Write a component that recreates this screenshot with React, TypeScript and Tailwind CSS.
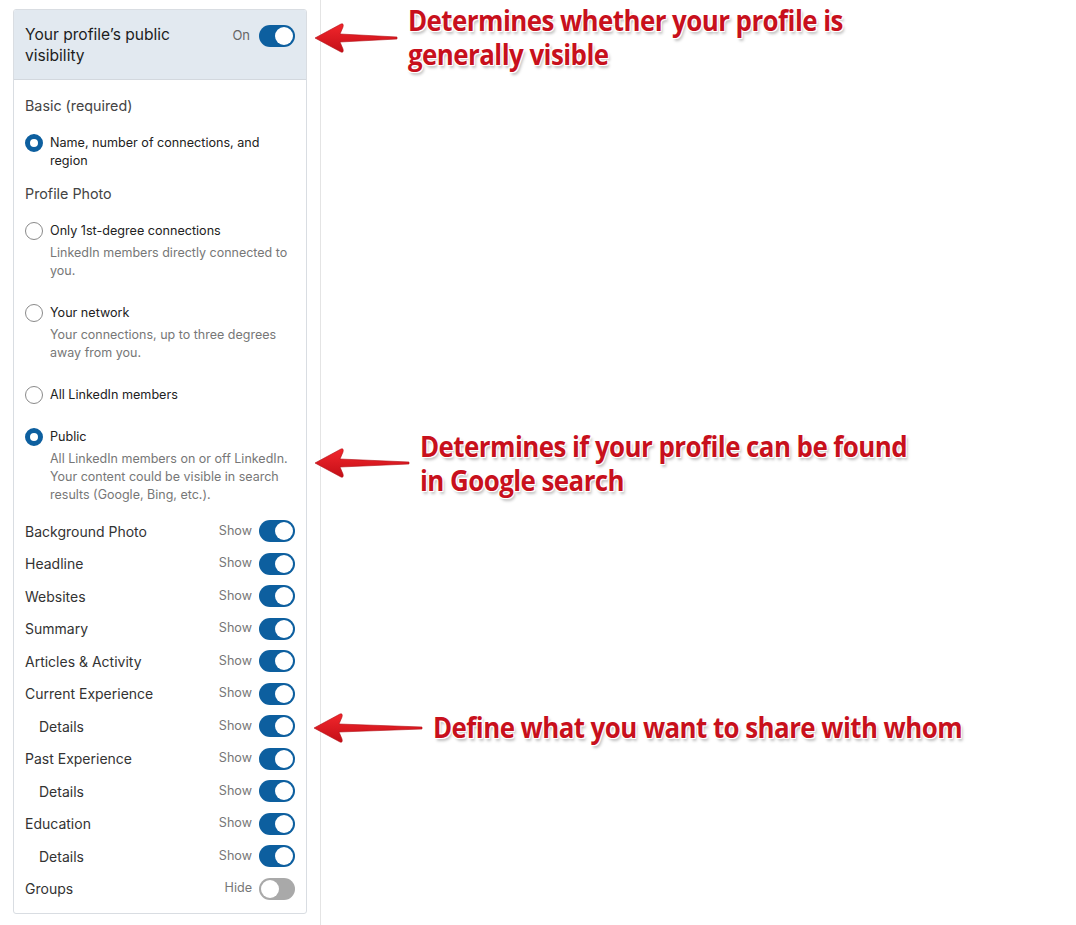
import React from "react";

type ToggleRow = { label: string; on: boolean; sub?: boolean };

const rows: ToggleRow[] = [
  { label: "Background Photo", on: true },
  { label: "Headline", on: true },
  { label: "Websites", on: true },
  { label: "Summary", on: true },
  { label: "Articles & Activity", on: true },
  { label: "Current Experience", on: true },
  { label: "Details", on: true, sub: true },
  { label: "Past Experience", on: true },
  { label: "Details", on: true, sub: true },
  { label: "Education", on: true },
  { label: "Details", on: true, sub: true },
  { label: "Groups", on: false },
];

function Switch({ on }: { on: boolean }) {
  return (
    <span
      className={`flex h-[22px] w-[36px] items-center rounded-full p-[2px] ${
        on ? "justify-end bg-[#0d5f9f]" : "justify-start bg-[#a9a9a9]"
      }`}
    >
      <span className="h-[18px] w-[18px] rounded-full bg-white" />
    </span>
  );
}

function Radio({ checked }: { checked: boolean }) {
  return (
    <span
      className={`mt-[1px] h-[18px] w-[18px] shrink-0 rounded-full bg-white ${
        checked ? "border-[5px] border-[#0d5f9f]" : "border-[1.5px] border-[#8a8a8a]"
      }`}
    />
  );
}

function Option({ checked, title, desc }: { checked: boolean; title: string; desc?: string }) {
  return (
    <div className="flex gap-[7px]">
      <Radio checked={checked} />
      <div className="pt-[1px]">
        <div className="text-[12.6px] leading-[18px] text-[#222]">{title}</div>
        {desc && <div className="mt-[4px] text-[12.5px] leading-[18px] text-[#777]">{desc}</div>}
      </div>
    </div>
  );
}

function Arrow({ width }: { width: number }) {
  return (
    <svg width={width} height="34" viewBox={`0 0 ${width} 34`}>
      <defs>
        <linearGradient id={`ar${width}`} x1="0" y1="0" x2="0" y2="1">
          <stop offset="0" stopColor="#f2262c" />
          <stop offset="1" stopColor="#c40f17" />
        </linearGradient>
      </defs>
      <path
        d={`M2 17 L28 3 Q31 2 30 6 L27 13 L${width - 2} 16 L${width - 2} 18 L27 21 L30 28 Q31 32 28 31 Z`}
        fill={`url(#ar${width})`}
        stroke="#b10d14"
        strokeWidth="0.6"
        strokeLinejoin="round"
      />
    </svg>
  );
}

const noteCls =
  "absolute font-['Open_Sans',sans-serif] font-bold text-[28px] leading-[34px] text-[#c8101c] tracking-[-0.6px] [text-shadow:0_0_2px_#fff,1px_1px_0_#fff,-1px_-1px_0_#fff,1px_-1px_0_#fff,-1px_1px_0_#fff,2px_3px_3px_rgba(0,0,0,0.25)] origin-left scale-x-[0.925] whitespace-nowrap";

export default function App() {
  return (
    <div className="relative flex h-[925px] w-[1076px] overflow-hidden bg-white font-['Inter','Liberation_Sans',sans-serif]">
      <div className="h-full w-[321px] shrink-0 border-r border-[#e4e4e4] pl-[13px] pt-[9px]">
        <div className="w-[294px] overflow-hidden rounded-[3px] border border-[#d9dde2] bg-white">
          <div className="flex h-[70px] items-start justify-between border-b border-[#d3d8de] bg-[#e2e9f0] pl-[11px] pr-[11px] pt-[14px]">
            <div className="text-[15.6px] leading-[21px] text-[#1d1d1d]">
              Your profile’s public
              <br />
              visibility
            </div>
            <div className="flex items-center gap-[9px] pt-[1px]">
              <span className="text-[13px] text-[#666]">On</span>
              <Switch on />
            </div>
          </div>

          <div className="pl-[11px] pr-[11px] pt-[16px] pb-[8px]">
            <div className="text-[14.3px] leading-[20px] text-[#444]">Basic (required)</div>
            <div className="mt-[17px]">
              <Option checked title="Name, number of connections, and region" />
            </div>
            <div className="mt-[14px] text-[14.3px] leading-[20px] text-[#444]">Profile Photo</div>
            <div className="mt-[17px] flex flex-col gap-[23px]">
              <Option
                checked={false}
                title="Only 1st-degree connections"
                desc="LinkedIn members directly connected to you."
              />
              <Option
                checked={false}
                title="Your network"
                desc="Your connections, up to three degrees away from you."
              />
              <Option checked={false} title="All LinkedIn members" />
              <Option
                checked
                title="Public"
                desc="All LinkedIn members on or off LinkedIn. Your content could be visible in search results (Google, Bing, etc.)."
              />
            </div>

            <div className="mt-[11px]">
              {rows.map((r, i) => (
                <div key={i} className="flex h-[32.5px] items-center justify-between">
                  <span className={`text-[14px] text-[#333] ${r.sub ? "pl-[14px]" : ""}`}>{r.label}</span>
                  <span className="flex items-center gap-[7px]">
                    <span className="text-[12.6px] text-[#777]">{r.on ? "Show" : "Hide"}</span>
                    <Switch on={r.on} />
                  </span>
                </div>
              ))}
            </div>
          </div>
        </div>
      </div>

      {/* callouts */}
      <div className="absolute left-[313px] top-[21px]">
        <Arrow width={86} />
      </div>
      <div className={noteCls} style={{ left: 408, top: 3 }}>
        Determines whether your profile is
        <br />
        generally visible
      </div>

      <div className="absolute left-[313px] top-[446px]">
        <Arrow width={98} />
      </div>
      <div className={noteCls} style={{ left: 420, top: 429 }}>
        Determines if your profile can be found
        <br />
        in Google search
      </div>

      <div className="absolute left-[312px] top-[711px]">
        <Arrow width={112} />
      </div>
      <div className={noteCls} style={{ left: 433, top: 710 }}>
        Define what you want to share with whom
      </div>
    </div>
  );
}
